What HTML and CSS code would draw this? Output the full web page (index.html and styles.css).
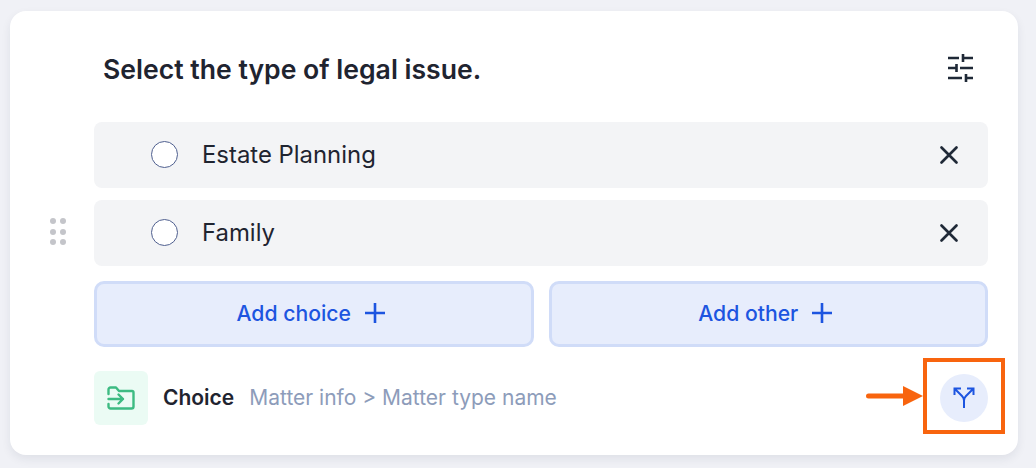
FILE: index.html
```html
<!DOCTYPE html>
<html lang="en">
<head>
  <meta charset="UTF-8" />
  <title>Choice block</title>
  <link rel="stylesheet" href="styles.css">
</head>
<body>
  <div class="card">
    <div class="header">
      <h2>Select the type of legal issue.</h2>
      <svg class="icon-settings" width="30" height="30" viewBox="0 0 30 30" fill="none" stroke="#1f2937" stroke-width="2.6">
        <path d="M2 5H13M17 5H27M17 1V9"/>
        <path d="M2 15H10.5M14 15H27M10.5 11V19"/>
        <path d="M2 25H16M20 25H27M20 21V29"/>
      </svg>
    </div>

    <div class="choices">
      <div class="choice">
        <span class="radio"></span>
        <span class="choice-label">Estate Planning</span>
        <svg width="20" height="20" viewBox="0 0 20 20" stroke="#1f2937" stroke-width="2.7" stroke-linecap="round"><path d="M2.5 2.5L17.5 17.5M17.5 2.5L2.5 17.5"/></svg>
      </div>
      <div class="choice">
        <span class="radio"></span>
        <span class="choice-label">Family</span>
        <svg width="20" height="20" viewBox="0 0 20 20" stroke="#1f2937" stroke-width="2.7" stroke-linecap="round"><path d="M2.5 2.5L17.5 17.5M17.5 2.5L2.5 17.5"/></svg>
      </div>
      <!-- handle sits in the gutter left of the rows -->
      <div class="handle">
        <i></i><i></i><i></i><i></i><i></i><i></i>
      </div>
    </div>

    <div class="actions">
      <button class="add-btn">Add choice
        <svg width="32" height="32" viewBox="0 0 32 32" stroke="#1d55e0" stroke-width="2.6"><path d="M6 16H26M16 6V26"/></svg>
      </button>
      <button class="add-btn">Add other
        <svg width="32" height="32" viewBox="0 0 32 32" stroke="#1d55e0" stroke-width="2.6"><path d="M6 16H26M16 6V26"/></svg>
      </button>
    </div>

    <div class="footer">
      <span class="type-icon">
        <svg width="28" height="24" viewBox="0 0 28 24" fill="none" stroke="#3dbb82" stroke-width="2.4" stroke-linecap="round" stroke-linejoin="round">
          <path d="M1.5 8V3.5C1.5 2.4 2.4 1.5 3.5 1.5H9L12 5H25C26 5 26.5 5.8 26.5 6.5V20.5C26.5 21.6 25.6 22.5 24.5 22.5H3.5C2.4 22.5 1.5 21.6 1.5 20.5V18"/>
          <path d="M1.5 13H16M11.5 8.5L16 13L11.5 17.5"/>
        </svg>
      </span>
      <span class="type-name">Choice</span>
      <span class="type-path">Matter info &gt; Matter type name</span>
      <span class="branch">
        <svg width="22" height="22" viewBox="0 0 22 22" fill="none" stroke="#1d55e0" stroke-width="2">
          <path d="M11 21V13.5C11 11.5 10.5 10.5 9 9L2 2M1.5 8V1.5H8"/>
          <path d="M11 13.5C11 11.5 11.5 10.5 13 9L20 2M14 1.5H20.5V8"/>
        </svg>
      </span>
    </div>

    <!-- annotation drawn on top of the screenshot -->
    <div class="callout-box"></div>
    <svg class="callout-arrow" width="58" height="20" viewBox="0 0 58 20">
      <path d="M2.5 10H38" stroke="#f8640e" stroke-width="5" stroke-linecap="round"/>
      <path d="M37 0L57 10L37 20Z" fill="#f8640e"/>
    </svg>
  </div>
</body>
</html>
```

FILE: styles.css
```css
html, body {
  height: 100%;
}

body {
  margin: 0;
  padding: 11px 18px 13px 10px;
  box-sizing: border-box;
  font-family: Inter, "Liberation Sans", sans-serif;
  background-color: #f0f1f6;
  color: #1f2430;
  overflow: hidden;
}

.card {
  position: relative;
  height: 444px;
  box-sizing: border-box;
  padding: 0 30px 0 84px;
  background: #fff;
  border-radius: 16px;
  box-shadow: 0 4px 10px rgba(30, 40, 70, 0.08);
}

.header {
  display: flex;
  align-items: center;
  justify-content: space-between;
  height: 111px;
  padding: 0 12px 0 9px;
  box-sizing: border-box;
}

h2 {
  margin: 5px 0 0;
  font-size: 26.6px;
  font-weight: 600;
  color: #1f2430;
}

.icon-settings {
  margin-top: 3px;
}

.choices {
  position: relative;
  display: flex;
  flex-direction: column;
  gap: 12px;
}

.choice {
  display: flex;
  align-items: center;
  height: 66px;
  padding: 0 29px 0 57px;
  box-sizing: border-box;
  background: #f3f4f6;
  border-radius: 8px;
}

.radio {
  width: 27px;
  height: 27px;
  margin-bottom: 1px;
  box-sizing: border-box;
  background: #fff;
  border: 1px solid #4f5f8f;
  border-radius: 50%;
}

.choice-label {
  flex: 1;
  margin: 0 0 2px 24px;
  font-size: 23.9px;
  color: #1f2430;
}

.handle {
  position: absolute;
  left: -44px;
  top: 96px;
  display: grid;
  grid-template-columns: 6px 6px;
  column-gap: 4px;
  row-gap: 4.5px;
}

.handle i {
  width: 6px;
  height: 6px;
  background: #c4c5ca;
  border-radius: 50%;
}

.actions {
  display: flex;
  gap: 15px;
  margin-top: 15px;
}

.add-btn {
  flex: 1;
  display: flex;
  align-items: center;
  justify-content: center;
  gap: 8px;
  height: 66px;
  padding: 0 0 2px;
  font-family: inherit;
  font-size: 21.2px;
  font-weight: 500;
  color: #1d55e0;
  background-color: #e7edfc;
  border: 3px solid #d0dcf8;
  border-radius: 10px;
}

.footer {
  display: flex;
  align-items: center;
  margin-top: 24px;
}

.type-icon {
  display: flex;
  align-items: center;
  justify-content: center;
  width: 54px;
  height: 54px;
  background: #ebfbf4;
  border-radius: 6px;
}

.type-name {
  margin: 0 0 1px 15px;
  font-size: 21px;
  font-weight: 600;
  color: #1f2430;
}

.type-path {
  flex: 1;
  margin: 0 0 1px 15px;
  font-size: 21px;
  color: #8d9cba;
}

.branch {
  display: flex;
  align-items: center;
  justify-content: center;
  width: 48px;
  height: 48px;
  background: #e7edfc;
  border-radius: 50%;
}

.callout-box {
  position: absolute;
  left: 913px;
  top: 347px;
  width: 82px;
  height: 76px;
  box-sizing: border-box;
  border: 4px solid #f8640e;
}

.callout-arrow {
  position: absolute;
  left: 856px;
  top: 375px;
}
```
